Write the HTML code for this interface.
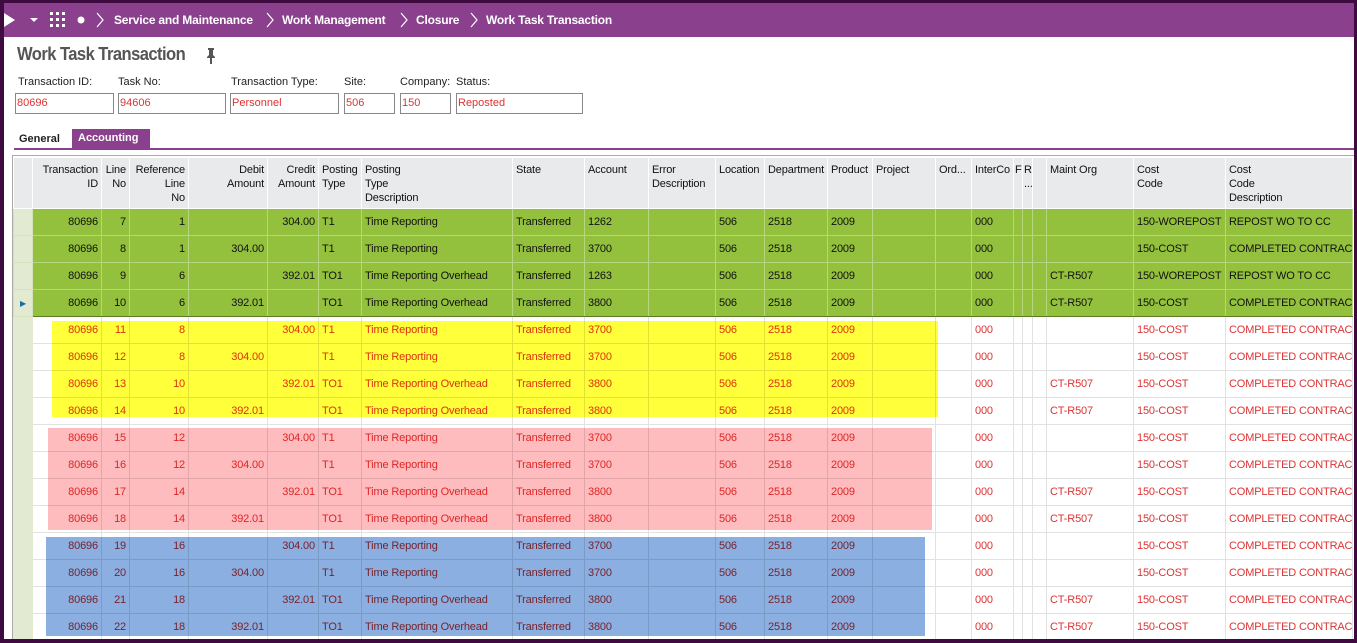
<!DOCTYPE html>
<html><head><meta charset="utf-8"><style>
*{box-sizing:border-box;margin:0;padding:0}
body{width:1357px;height:643px;overflow:hidden;background:#3f0a40;font-family:"Liberation Sans",Arial,sans-serif;position:relative}
#page{position:absolute;left:4px;top:3px;width:1350px;height:636px;background:#fff;overflow:hidden}
#bar{position:absolute;left:0;top:0;width:1350px;height:34px;background:#8a408c;color:#fff;font-size:12px;font-weight:bold;letter-spacing:-0.2px}
#bar span{position:absolute;top:10px}
.abs{position:absolute}
.lbl{position:absolute;top:73px;font-size:11px;color:#222}
.inp{position:absolute;top:90px;height:21px;border:1px solid #888;color:#d33;font-size:11px;padding:3px 1px}
table{position:absolute;left:9px;top:154px;width:1339px;border-collapse:collapse;table-layout:fixed;font-size:11px;color:#111;letter-spacing:-0.15px}
td,th{height:27px;border:1px solid #e2e2e2;padding:0 3px;white-space:nowrap;overflow:hidden}
th{height:51px;background:#e9eaec;font-weight:normal;vertical-align:top;padding-top:5px;line-height:14px;text-align:left;border-color:#fff;font-size:11px}
th.r,td.r{text-align:right}
td.s{background:#e2ebd1;border-color:#e2ebd1;padding:0;color:#1670a8;font-size:8px;text-align:center}
tr.g td{background:#93c13d;border-color:#b7d67e}
tr.g td.s{background:#e2ebd1;border-color:#d6e2bd}
tr.sel td{border-bottom:1px solid #5b7c24;border-top:1px solid #5b7c24}
tr.w td{color:#dd3333}
.ov{position:absolute;mix-blend-mode:multiply}
</style></head><body><div id="page">
<div id="bar">
<svg class="abs" style="left:0;top:10px" width="12" height="14"><path d="M0 0L11 7L0 14Z" fill="#fff"/></svg>
<svg class="abs" style="left:26px;top:15px" width="8" height="5"><path d="M0 0H8L4 4Z" fill="#fff"/></svg>
<svg class="abs" style="left:46px;top:9px" width="16" height="16" fill="#fff"><rect x="0" y="0" width="3" height="3"/><rect x="6" y="0" width="3" height="3"/><rect x="12" y="0" width="3" height="3"/><rect x="0" y="6" width="3" height="3"/><rect x="6" y="6" width="3" height="3"/><rect x="12" y="6" width="3" height="3"/><rect x="0" y="12" width="3" height="3"/><rect x="6" y="12" width="3" height="3"/><rect x="12" y="12" width="3" height="3"/></svg>
<svg class="abs" style="left:73px;top:13px" width="8" height="8"><circle cx="4" cy="4" r="3.5" fill="#fff"/></svg>
<svg class="abs" style="left:92px;top:9px" width="8" height="16"><path d="M1 1L7 8L1 15" stroke="#fff" fill="none" stroke-width="1.2"/></svg>
<span style="left:110px">Service and Maintenance</span>
<svg class="abs" style="left:262px;top:9px" width="8" height="16"><path d="M1 1L7 8L1 15" stroke="#fff" fill="none" stroke-width="1.2"/></svg>
<span style="left:278px">Work Management</span>
<svg class="abs" style="left:396px;top:9px" width="8" height="16"><path d="M1 1L7 8L1 15" stroke="#fff" fill="none" stroke-width="1.2"/></svg>
<span style="left:412px">Closure</span>
<svg class="abs" style="left:466px;top:9px" width="8" height="16"><path d="M1 1L7 8L1 15" stroke="#fff" fill="none" stroke-width="1.2"/></svg>
<span style="left:482px">Work Task Transaction</span>
</div>
<div class="abs" style="left:13px;top:41px;font-size:18px;font-weight:bold;color:#555;letter-spacing:-0.6px;transform:scaleX(0.92);transform-origin:0 0">Work Task Transaction</div>
<svg class="abs" style="left:202px;top:45px" width="10" height="16"><path d="M2 0H8V2H7V7L9 9V10H6V16H4V10H1V9L3 7V2H2Z" fill="#555"/></svg>
<div class="lbl" style="left:14px">Transaction ID:</div>
<div class="lbl" style="left:114px">Task No:</div>
<div class="lbl" style="left:227px">Transaction Type:</div>
<div class="lbl" style="left:340px">Site:</div>
<div class="lbl" style="left:396px">Company:</div>
<div class="lbl" style="left:452px">Status:</div>
<div class="inp" style="left:11px;width:99px">80696</div>
<div class="inp" style="left:114px;width:108px">94606</div>
<div class="inp" style="left:226px;width:109px">Personnel</div>
<div class="inp" style="left:340px;width:51px">506</div>
<div class="inp" style="left:396px;width:51px">150</div>
<div class="inp" style="left:452px;width:127px">Reposted</div>
<div class="abs" style="left:11px;top:127px;font-size:11px;font-weight:bold;color:#222;padding:3px 4px">General</div>
<div class="abs" style="left:68px;top:126px;width:78px;height:19px;background:#8a408c;color:#fff;font-size:11px;font-weight:bold;padding:3px 6px">Accounting</div>
<div class="abs" style="left:10px;top:145px;width:1340px;height:2px;background:#8a408c"></div>
<div class="abs" style="left:8px;top:152px;width:1342px;height:1px;background:#aaa"></div>
<div class="abs" style="left:8px;top:152px;width:1px;height:490px;background:#aaa"></div>
<table>
<colgroup><col style="width:19px"><col style="width:69px"><col style="width:28px"><col style="width:59px"><col style="width:79px"><col style="width:51px"><col style="width:43px"><col style="width:151px"><col style="width:72px"><col style="width:64px"><col style="width:67px"><col style="width:49px"><col style="width:63px"><col style="width:45px"><col style="width:63px"><col style="width:36px"><col style="width:42px"><col style="width:9px"><col style="width:10px"><col style="width:14px"><col style="width:87px"><col style="width:92px"><col style="width:127px"></colgroup>
<tr><th></th><th class="r">Transaction<br>ID</th><th class="r">Line<br>No</th><th class="r">Reference<br>Line<br>No</th><th class="r">Debit<br>Amount</th><th class="r">Credit<br>Amount</th><th>Posting<br>Type</th><th>Posting<br>Type<br>Description</th><th>State</th><th>Account</th><th>Error<br>Description</th><th>Location</th><th>Department</th><th>Product</th><th>Project</th><th>Ord...</th><th>InterCo</th><th style="padding:5px 1px">F</th><th style="padding:5px 1px">R...<br>...</th><th></th><th>Maint Org</th><th>Cost<br>Code</th><th>Cost<br>Code<br>Description</th></tr>
<tr class="g"><td class="s"></td><td class="r">80696</td><td class="r">7</td><td class="r">1</td><td class="r"></td><td class="r">304.00</td><td>T1</td><td>Time Reporting</td><td>Transferred</td><td>1262</td><td></td><td>506</td><td>2518</td><td>2009</td><td></td><td></td><td>000</td><td></td><td></td><td></td><td></td><td>150-WOREPOST</td><td>REPOST WO TO CC</td></tr>
<tr class="g"><td class="s"></td><td class="r">80696</td><td class="r">8</td><td class="r">1</td><td class="r">304.00</td><td class="r"></td><td>T1</td><td>Time Reporting</td><td>Transferred</td><td>3700</td><td></td><td>506</td><td>2518</td><td>2009</td><td></td><td></td><td>000</td><td></td><td></td><td></td><td></td><td>150-COST</td><td>COMPLETED CONTRACT</td></tr>
<tr class="g"><td class="s"></td><td class="r">80696</td><td class="r">9</td><td class="r">6</td><td class="r"></td><td class="r">392.01</td><td>TO1</td><td>Time Reporting Overhead</td><td>Transferred</td><td>1263</td><td></td><td>506</td><td>2518</td><td>2009</td><td></td><td></td><td>000</td><td></td><td></td><td></td><td>CT-R507</td><td>150-WOREPOST</td><td>REPOST WO TO CC</td></tr>
<tr class="g sel"><td class="s">&#9654;</td><td class="r">80696</td><td class="r">10</td><td class="r">6</td><td class="r">392.01</td><td class="r"></td><td>TO1</td><td>Time Reporting Overhead</td><td>Transferred</td><td>3800</td><td></td><td>506</td><td>2518</td><td>2009</td><td></td><td></td><td>000</td><td></td><td></td><td></td><td>CT-R507</td><td>150-COST</td><td>COMPLETED CONTRACT</td></tr>
<tr class="w"><td class="s"></td><td class="r">80696</td><td class="r">11</td><td class="r">8</td><td class="r"></td><td class="r">304.00</td><td>T1</td><td>Time Reporting</td><td>Transferred</td><td>3700</td><td></td><td>506</td><td>2518</td><td>2009</td><td></td><td></td><td>000</td><td></td><td></td><td></td><td></td><td>150-COST</td><td>COMPLETED CONTRACT</td></tr>
<tr class="w"><td class="s"></td><td class="r">80696</td><td class="r">12</td><td class="r">8</td><td class="r">304.00</td><td class="r"></td><td>T1</td><td>Time Reporting</td><td>Transferred</td><td>3700</td><td></td><td>506</td><td>2518</td><td>2009</td><td></td><td></td><td>000</td><td></td><td></td><td></td><td></td><td>150-COST</td><td>COMPLETED CONTRACT</td></tr>
<tr class="w"><td class="s"></td><td class="r">80696</td><td class="r">13</td><td class="r">10</td><td class="r"></td><td class="r">392.01</td><td>TO1</td><td>Time Reporting Overhead</td><td>Transferred</td><td>3800</td><td></td><td>506</td><td>2518</td><td>2009</td><td></td><td></td><td>000</td><td></td><td></td><td></td><td>CT-R507</td><td>150-COST</td><td>COMPLETED CONTRACT</td></tr>
<tr class="w"><td class="s"></td><td class="r">80696</td><td class="r">14</td><td class="r">10</td><td class="r">392.01</td><td class="r"></td><td>TO1</td><td>Time Reporting Overhead</td><td>Transferred</td><td>3800</td><td></td><td>506</td><td>2518</td><td>2009</td><td></td><td></td><td>000</td><td></td><td></td><td></td><td>CT-R507</td><td>150-COST</td><td>COMPLETED CONTRACT</td></tr>
<tr class="w"><td class="s"></td><td class="r">80696</td><td class="r">15</td><td class="r">12</td><td class="r"></td><td class="r">304.00</td><td>T1</td><td>Time Reporting</td><td>Transferred</td><td>3700</td><td></td><td>506</td><td>2518</td><td>2009</td><td></td><td></td><td>000</td><td></td><td></td><td></td><td></td><td>150-COST</td><td>COMPLETED CONTRACT</td></tr>
<tr class="w"><td class="s"></td><td class="r">80696</td><td class="r">16</td><td class="r">12</td><td class="r">304.00</td><td class="r"></td><td>T1</td><td>Time Reporting</td><td>Transferred</td><td>3700</td><td></td><td>506</td><td>2518</td><td>2009</td><td></td><td></td><td>000</td><td></td><td></td><td></td><td></td><td>150-COST</td><td>COMPLETED CONTRACT</td></tr>
<tr class="w"><td class="s"></td><td class="r">80696</td><td class="r">17</td><td class="r">14</td><td class="r"></td><td class="r">392.01</td><td>TO1</td><td>Time Reporting Overhead</td><td>Transferred</td><td>3800</td><td></td><td>506</td><td>2518</td><td>2009</td><td></td><td></td><td>000</td><td></td><td></td><td></td><td>CT-R507</td><td>150-COST</td><td>COMPLETED CONTRACT</td></tr>
<tr class="w"><td class="s"></td><td class="r">80696</td><td class="r">18</td><td class="r">14</td><td class="r">392.01</td><td class="r"></td><td>TO1</td><td>Time Reporting Overhead</td><td>Transferred</td><td>3800</td><td></td><td>506</td><td>2518</td><td>2009</td><td></td><td></td><td>000</td><td></td><td></td><td></td><td>CT-R507</td><td>150-COST</td><td>COMPLETED CONTRACT</td></tr>
<tr class="w"><td class="s"></td><td class="r">80696</td><td class="r">19</td><td class="r">16</td><td class="r"></td><td class="r">304.00</td><td>T1</td><td>Time Reporting</td><td>Transferred</td><td>3700</td><td></td><td>506</td><td>2518</td><td>2009</td><td></td><td></td><td>000</td><td></td><td></td><td></td><td></td><td>150-COST</td><td>COMPLETED CONTRACT</td></tr>
<tr class="w"><td class="s"></td><td class="r">80696</td><td class="r">20</td><td class="r">16</td><td class="r">304.00</td><td class="r"></td><td>T1</td><td>Time Reporting</td><td>Transferred</td><td>3700</td><td></td><td>506</td><td>2518</td><td>2009</td><td></td><td></td><td>000</td><td></td><td></td><td></td><td></td><td>150-COST</td><td>COMPLETED CONTRACT</td></tr>
<tr class="w"><td class="s"></td><td class="r">80696</td><td class="r">21</td><td class="r">18</td><td class="r"></td><td class="r">392.01</td><td>TO1</td><td>Time Reporting Overhead</td><td>Transferred</td><td>3800</td><td></td><td>506</td><td>2518</td><td>2009</td><td></td><td></td><td>000</td><td></td><td></td><td></td><td>CT-R507</td><td>150-COST</td><td>COMPLETED CONTRACT</td></tr>
<tr class="w"><td class="s"></td><td class="r">80696</td><td class="r">22</td><td class="r">18</td><td class="r">392.01</td><td class="r"></td><td>TO1</td><td>Time Reporting Overhead</td><td>Transferred</td><td>3800</td><td></td><td>506</td><td>2518</td><td>2009</td><td></td><td></td><td>000</td><td></td><td></td><td></td><td>CT-R507</td><td>150-COST</td><td>COMPLETED CONTRACT</td></tr>
</table>
<div class="ov" style="left:48px;top:318px;width:886px;height:96px;background:#ffff3a"></div>
<div class="ov" style="left:44px;top:425px;width:884px;height:102px;background:#ffbcbe"></div>
<div class="ov" style="left:42px;top:534px;width:879px;height:99px;background:#8aafe0"></div>
</div></body></html>
